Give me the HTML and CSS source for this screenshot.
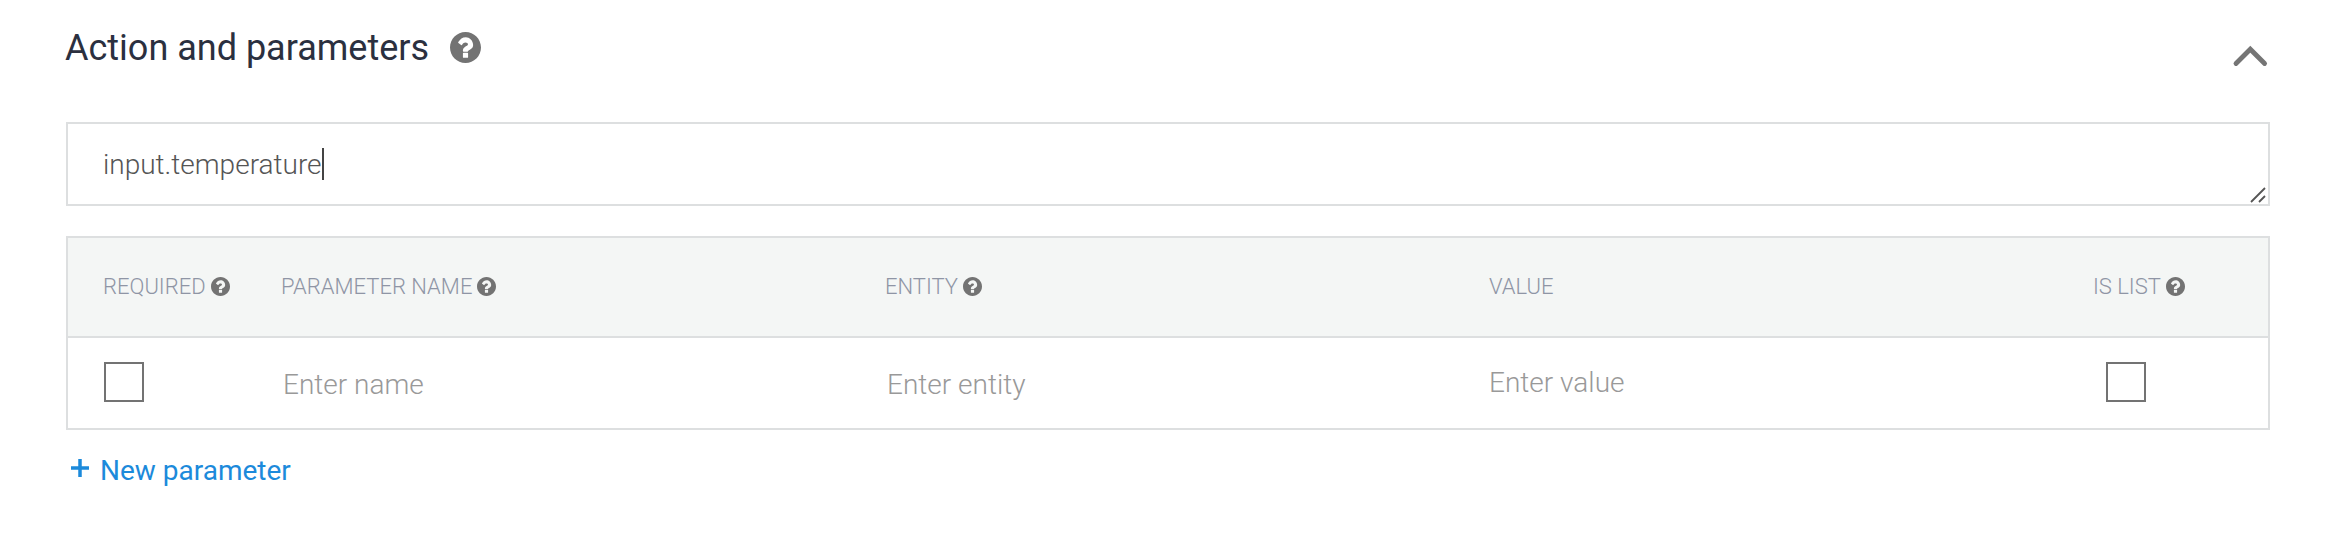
FILE: index.html
```html
<!DOCTYPE html>
<html lang="en"><head><meta charset="utf-8"><title>Action and parameters</title><link rel="stylesheet" href="styles.css"></head>
<body>
<svg class="defs"><symbol id="help" viewBox="0 0 24 24"><path d="M12 0C5.400 0 0 5.400 0 12s5.400 12 12 12 12-5.400 12-12S18.600 0 12 0zm2 19.500c0 .3-.2.500-.5.500h-3c-.3 0-.5-.2-.5-.5v-3c0-.3.200-.5.500-.5h3c.3 0 .5.200.5.500zm3.900-9.500c0 2.400-1.700 3.200-2.900 3.900-.6.400-1 .6-1 .9 0 .3-.2.500-.5.500h-3c-.3 0-.5-.2-.5-.5v-.6c0-1.500 1.500-2.800 2.600-3.300.9-.4 1.300-.7 1.300-1.400 0-.7-.9-1.300-1.900-1.300-.5 0-1.100.2-1.400.4-.3.300-.6.500-1.300 1.400-.1.100-.2.200-.4.200-.1 0-.2 0-.3-.1L6.500 8.500c-.2-.2-.3-.4-.1-.7C7.800 5.500 9.600 4 12.300 4c2.700 0 5.600 2.600 5.600 6z"/></symbol></svg>
<main class="panel">
<header class="title"><h1>Action and parameters</h1><svg class="help large"><use href="#help"/></svg><svg class="chevron" viewBox="0 0 36 24"><path d="M4 19.500 18.300 5.200l14.300 14.300"/></svg></header>
<div class="action"><span class="value">input.temperature</span><i class="caret"></i><svg class="grip" viewBox="0 0 16 16"><path d="M1 15 15 1M9 15l6-6"/></svg></div>
<section class="table">
<div class="row head"><div>REQUIRED<svg class="help"><use href="#help"/></svg></div><div>PARAMETER NAME<svg class="help"><use href="#help"/></svg></div><div>ENTITY<svg class="help"><use href="#help"/></svg></div><div>VALUE</div><div>IS LIST<svg class="help"><use href="#help"/></svg></div></div>
<div class="row body"><div><i class="check"></i></div><div class="name">Enter name</div><div class="name">Enter entity</div><div class="val">Enter value</div><div class="list"><i class="check"></i></div></div>
</section>
<div class="new"><svg class="plus" viewBox="0 0 18 18"><path d="M9 0v18M0 9h18"/></svg><span>New parameter</span></div>
</main></body></html>
```
FILE: styles.css
```css
*{box-sizing:border-box}
body{margin:0;background:#fff;font-family:Roboto,sans-serif;font-weight:300}
.defs{position:absolute;width:0;height:0}
.panel{padding:0 62px 0 66px}
.title{display:flex;height:122px;padding-top:26px;align-items:flex-start}
h1{margin:0 0 0 -1px;font-size:36px;font-weight:400;line-height:44px;color:#2b303f}
.help{width:19px;height:19px;margin-left:5px;fill:#737373;flex:none}
.large{width:31px;height:31px;margin:6px 0 0 21px}
.chevron{width:36px;height:24px;margin:18px 2px 0 auto;fill:none;stroke:#757575;stroke-width:4.800;stroke-linecap:round}
.action{position:relative;display:flex;align-items:center;height:84px;border:2px solid #dddfe0;padding-left:35px;font-size:28px;color:#555}
.caret{width:2px;height:32px;background:#444}
.grip{position:absolute;right:2px;bottom:1px;width:16px;height:16px;fill:none;stroke:#555;stroke-width:1.800}
.table{margin-top:30px;border:2px solid #dddfe0}
.row{display:grid;grid-template-columns:178px 604px 604px 604px 1fr;padding-left:36px;align-items:center}
.row>div{display:flex;align-items:center}
.head{height:100px;padding-left:35px;padding-bottom:1px;background:#f4f6f5;border-bottom:2px solid #dddfe0;font-size:22px;color:#8f95a5}
.body{height:90px;font-size:28px;color:#999}
.check{width:40px;height:40px;margin-bottom:2px;border:2px solid #737373}
.name{padding:2px 0 0 1px}
.val{margin:-2px 0 0 -1px}
.list{padding-left:12px}
.new{display:flex;align-items:center;margin-top:18px;padding-left:5px;height:44px;font-size:28px;font-weight:400;color:#1c8adb}
.plus{width:18px;height:18px;margin:0 11px 5px 0;stroke:#1c8adb;stroke-width:3.500}
```
